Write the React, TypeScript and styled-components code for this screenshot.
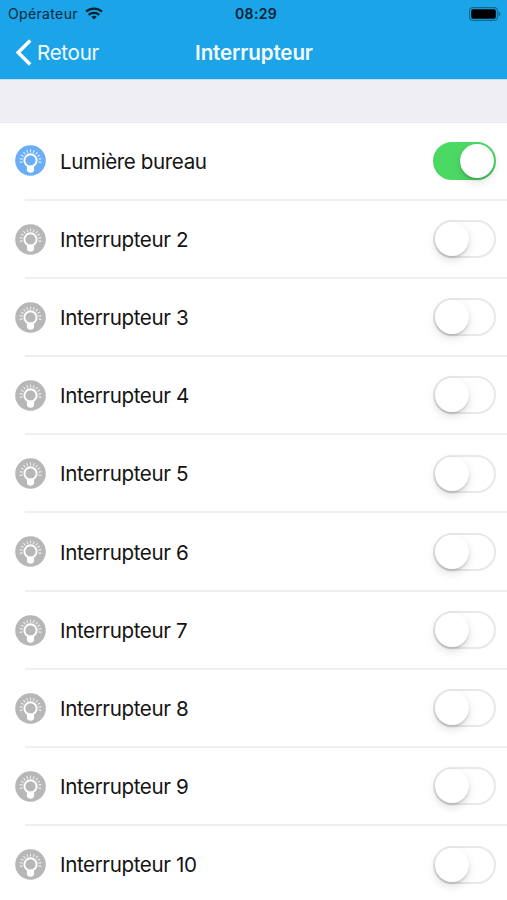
import React from "react";
import styled, { createGlobalStyle } from "styled-components";

const GlobalStyle = createGlobalStyle`
  * { box-sizing: border-box; }
  body { margin: 0; background: #fff; overflow: hidden; }
`;

const Screen = styled.div`
  width: 507px;
  height: 900px;
  overflow: hidden;
  background: #fff;
  color: #141415;
  font-family: Inter, "Liberation Sans", sans-serif;
`;

const Header = styled.header`
  height: 79px;
  background: #1ca4e8;
`;

const StatusBar = styled.div`
  display: grid;
  grid-template-columns: 1fr auto 1fr;
  align-items: center;
  height: 27px;
  padding: 0 6px 0 8px;
`;

const Carrier = styled.div`
  display: flex;
  align-items: center;
  gap: 7px;
  color: #08293b;
  font-size: 14px;
  letter-spacing: 0.35px;
`;

const Clock = styled.time`
  margin-left: 3px;
  color: #062234;
  font-size: 14px;
  font-weight: 600;
  letter-spacing: 0.3px;
`;

const BatterySlot = styled.div`
  display: flex;
  justify-content: flex-end;
`;

const NavBar = styled.nav`
  display: grid;
  grid-template-columns: 1fr auto 1fr;
  align-items: center;
  height: 51px;
  padding: 0 15px;
  color: #f3fbff;
`;

const BackButton = styled.button`
  display: flex;
  align-items: center;
  gap: 5px;
  padding: 0;
  border: 0;
  background: none;
  color: inherit;
  font: 400 20.6px Inter, "Liberation Sans", sans-serif;
  letter-spacing: -0.3px;
`;

const Title = styled.h1`
  margin: 0 0 0 1px;
  font-size: 20.6px;
  font-weight: 600;
  letter-spacing: -0.15px;
`;

const SectionGap = styled.div`
  height: 44px;
  background: #eeeef3;
  border-top: 1px solid #c3e1f2;
  border-bottom: 1px solid #e9e9ec;
`;

const List = styled.ul`
  margin: 0;
  padding: 0;
  list-style: none;
`;

const Row = styled.li`
  display: grid;
  grid-template-columns: 31px 1fr 63px;
  column-gap: 14px;
  align-items: center;
  height: 78.2px;
  padding: 0 11px 2.4px 15px;
  background: linear-gradient(#efeff0, #efeff0) 25px calc(100% - 0.5px) / 482px 2px no-repeat;
`;

const Label = styled.span`
  padding-top: 1.6px;
  font-size: 20.6px;
  line-height: 28px;
  letter-spacing: -0.4px;
  white-space: nowrap;
`;

const Track = styled.button<{ $on: boolean }>`
  display: flex;
  align-items: center;
  justify-content: ${(p) => (p.$on ? "flex-end" : "flex-start")};
  width: 63px;
  height: 38px;
  padding: 0;
  border: 2px solid ${(p) => (p.$on ? "#4bd964" : "#e8e8e8")};
  border-radius: 19px;
  background: ${(p) => (p.$on ? "#4bd964" : "#fff")};
`;

const Knob = styled.span`
  width: 34px;
  height: 34px;
  border-radius: 50%;
  background: #fff;
  box-shadow: 0 2px 2px rgba(0, 0, 0, 0.13), 0 4px 10px rgba(0, 0, 0, 0.13);
`;

const rays = [-100, -80, -60, -40, -20, 0, 20, 40, 60, 80, 100];

function BulbIcon({ on }: { on: boolean }) {
  const fill = on ? "#6aaef8" : "#b7b7b7";
  return (
    <svg width="31" height="31" viewBox="0 0 31 31">
      <circle cx="15.5" cy="15.5" r="15.3" fill={fill} />
      <g stroke="#fff" strokeOpacity="0.75" strokeWidth="1.1">
        {rays.map((angle) => (
          <path key={angle} d="M15.5 7.5V4.5" transform={`rotate(${angle} 15.5 15.5)`} />
        ))}
      </g>
      <circle cx="15.5" cy="15.4" r="6.1" fill={fill} stroke="#fff" strokeWidth="1.9" />
      <path d="M11.9 20.8h7.2v3.9c0 1.3-.7 2.1-1.6 2.5-.6.6-3.4.6-4 0-.9-.4-1.6-1.2-1.6-2.5Z" fill="#fff" />
    </svg>
  );
}

function WifiIcon() {
  return (
    <svg width="18" height="13" viewBox="0 0 18 13" fill="none" stroke="#062234" strokeWidth="2.3">
      <path d="M1 4.7C5.5.6 12.5.6 17 4.7" />
      <path d="M3.7 7.9c3-2.7 7.6-2.7 10.6 0" />
      <path d="M6.2 9.7c1.6-1.4 4-1.4 5.6 0L9 12.6Z" fill="#062234" stroke="none" />
    </svg>
  );
}

function BatteryIcon() {
  return (
    <svg width="32" height="14" viewBox="0 0 32 14">
      <rect x="0.6" y="0.6" width="27.8" height="12.8" rx="3.3" fill="none" stroke="#12698f" strokeWidth="1.1" />
      <rect x="2.2" y="2.3" width="24.6" height="9.4" rx="1.7" fill="#000" />
      <path d="M29.6 4.6c2.4.9 2.4 3.9 0 4.8Z" fill="#12698f" />
    </svg>
  );
}

function BackIcon() {
  return (
    <svg width="17" height="27" viewBox="0 0 17 27" fill="none" stroke="#fff" strokeWidth="3.5">
      <path d="M15.2 1.5 3.2 13.5l12 12" />
    </svg>
  );
}

const switches = [
  { name: "Lumière bureau", on: true },
  ...Array.from({ length: 9 }, (_, i) => ({ name: `Interrupteur ${i + 2}`, on: false })),
];

export default function App() {
  return (
    <Screen>
      <GlobalStyle />
      <Header>
        <StatusBar>
          <Carrier>
            Opérateur
            <WifiIcon />
          </Carrier>
          <Clock>08:29</Clock>
          <BatterySlot>
            <BatteryIcon />
          </BatterySlot>
        </StatusBar>
        <NavBar>
          <BackButton>
            <BackIcon />
            Retour
          </BackButton>
          <Title>Interrupteur</Title>
        </NavBar>
      </Header>
      <SectionGap />
      <List>
        {switches.map(({ name, on }) => (
          <Row key={name}>
            <BulbIcon on={on} />
            <Label>{name}</Label>
            <Track $on={on} role="switch" aria-checked={on} aria-label={name}>
              <Knob />
            </Track>
          </Row>
        ))}
      </List>
    </Screen>
  );
}
